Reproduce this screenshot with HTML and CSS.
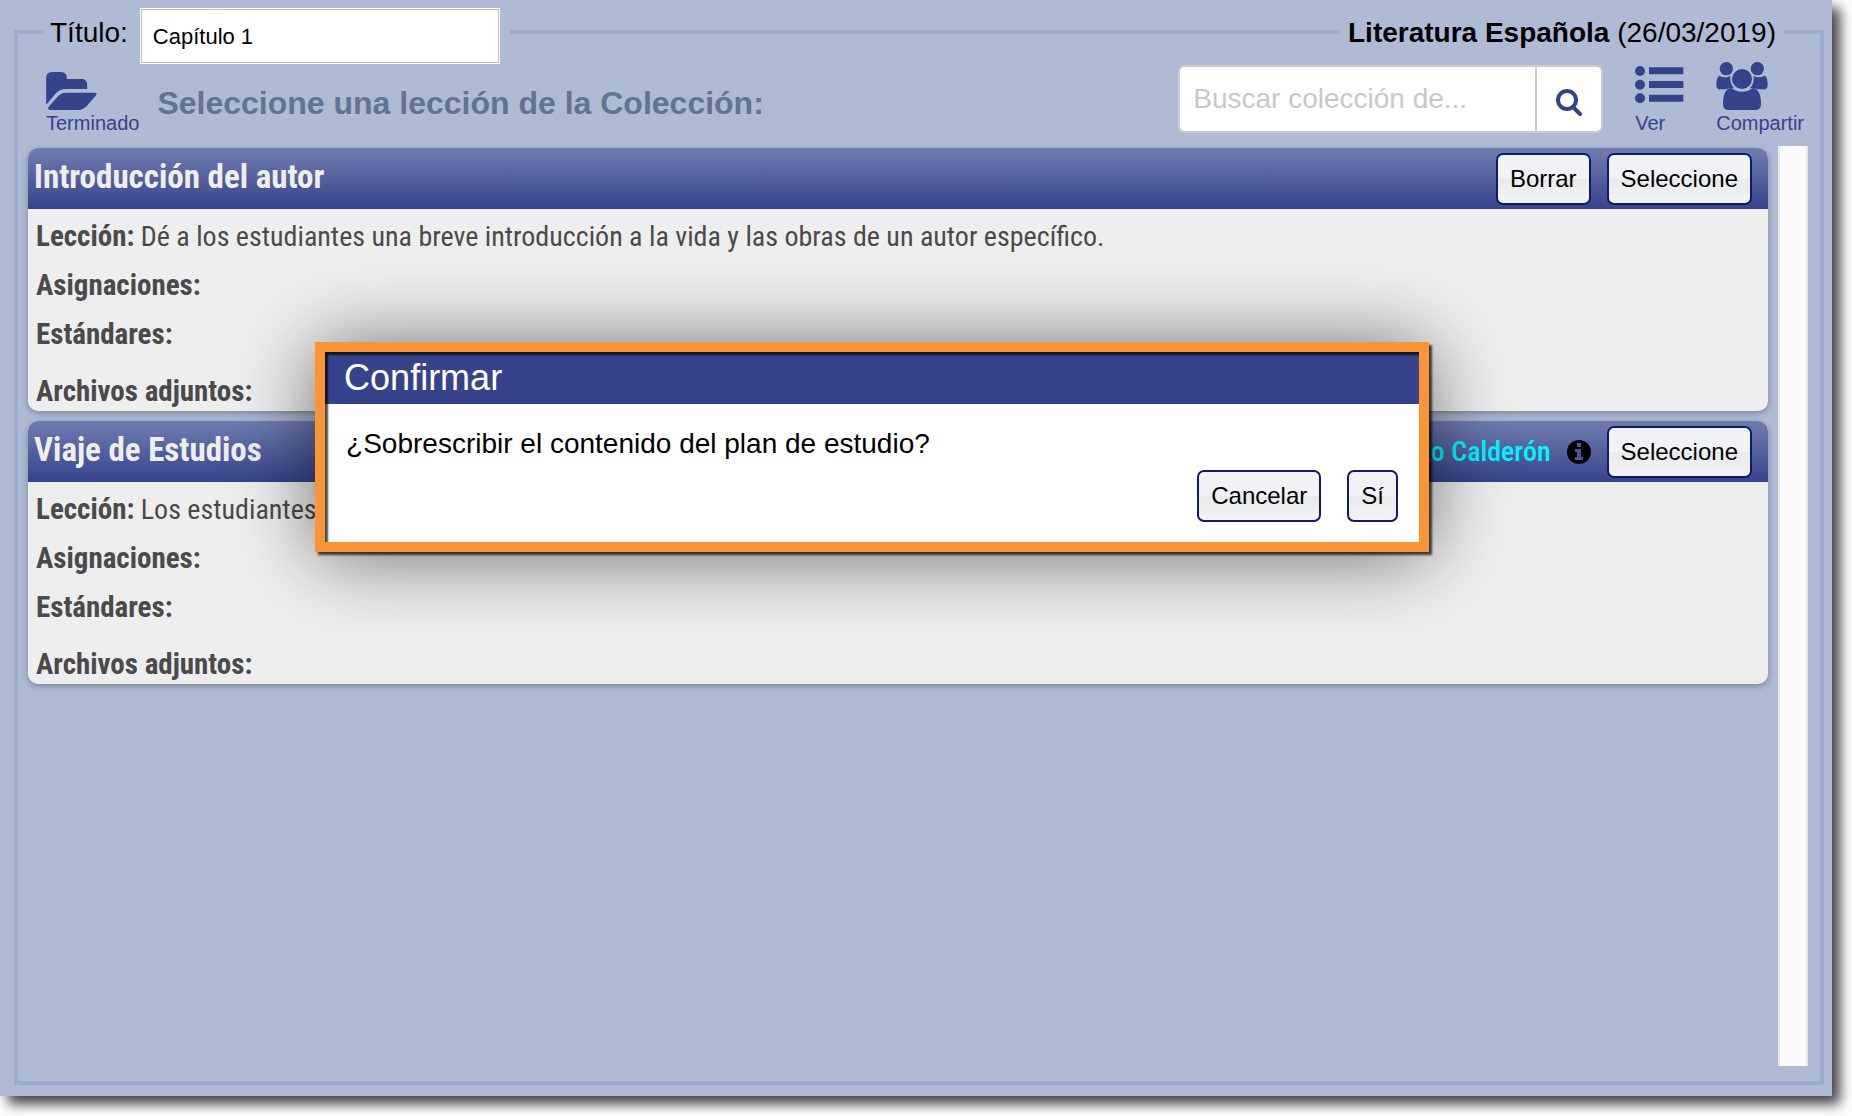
FILE: index.html
```html
<!DOCTYPE html>
<html lang="es">
<head>
    <meta charset="UTF-8">
    <meta name="viewport" content="width=device-width, initial-scale=1.0">
    <title>Literatura Española</title>
    <link rel="stylesheet" href="styles.css">
</head>
<body>
    <div class="window">
        <div class="frame">
            <header class="title-bar">
                <div class="legend">
                    <label for="title">Título:</label>
                    <input type="text" id="title" value="Capítulo 1">
                </div>
                <div class="legend legend-course"><span><b>Literatura Española</b> (26/03/2019)</span></div>
            </header>

            <div class="toolbar">
                <button class="tool">
                    <svg width="51" height="38" viewBox="0 0 152 114">
                        <path d="M0 18Q0 0 18 0H44Q62 0 62 18V21H106Q123 21 123 38V51H60Q42 51 30 63L0 98Z"/>
                        <path d="M12 114Q1 112 9 103L36 72Q46 62 60 62H145Q154 62 150 69L124 100Q112 114 96 114Z"/>
                    </svg>
                    Terminado
                </button>
                <h1>Seleccione una lección de la Colección:</h1>
                <form class="search">
                    <input type="text" placeholder="Buscar colección de..." aria-label="Buscar colección">
                    <button type="button" aria-label="Buscar">
                        <svg width="26" height="27" viewBox="0 0 26 27">
                            <circle cx="11" cy="11" r="9"/>
                            <path d="M17 18l7 7"/>
                        </svg>
                    </button>
                </form>
                <button class="tool tool-view">
                    <svg width="49" height="44" viewBox="0 0 147 132">
                        <circle cx="15" cy="15" r="15"/>
                        <circle cx="15" cy="56" r="15"/>
                        <circle cx="15" cy="97" r="15"/>
                        <path d="M42 4h103v21H42zM42 45h103v21H42zM42 86h103v21H42z"/>
                    </svg>
                    Ver
                </button>
                <button class="tool">
                    <svg width="52" height="48" viewBox="0 0 154 144">
                        <circle cx="30" cy="20" r="20"/>
                        <circle cx="123" cy="20" r="20"/>
                        <circle cx="77" cy="51" r="30"/>
                        <path d="M9 41Q26 50 42 42Q40 68 54 79Q38 77 30 82H12Q0 82 0 68Q0 46 9 41Z"/>
                        <path d="M145 41Q128 50 112 42Q114 68 100 79Q116 77 124 82H142Q154 82 154 68Q154 46 145 41Z"/>
                        <path d="M44 78Q58 89 77 89Q96 89 110 78Q134 82 134 126Q134 144 116 144H38Q20 144 20 126Q20 82 44 78Z"/>
                    </svg>
                    Compartir
                </button>
            </div>

            <main class="content">
                <div class="lessons">
                    <section class="lesson">
                        <div class="lesson-head">
                            <h2>Introducción del autor</h2>
                            <button class="btn">Borrar</button>
                            <button class="btn">Seleccione</button>
                        </div>
                        <div class="lesson-body">
                            <p><b>Lección:</b> Dé a los estudiantes una breve introducción a la vida y las obras de un autor específico.</p>
                            <p><b>Asignaciones:</b></p>
                            <p><b>Estándares:</b></p>
                            <p class="files"><b>Archivos adjuntos:</b></p>
                        </div>
                    </section>
                    <section class="lesson">
                        <div class="lesson-head">
                            <h2>Viaje de Estudios</h2>
                            <span class="author">Alberto Calderón</span>
                            <svg class="info" width="24" height="24" viewBox="0 0 24 24">
                                <circle cx="12" cy="12" r="12"/>
                                <path d="M10 3h4v4h-4zM8 9h6v8h2v3H8v-3h2v-5H8z"/>
                            </svg>
                            <button class="btn">Seleccione</button>
                        </div>
                        <div class="lesson-body">
                            <p><b>Lección:</b> Los estudiantes</p>
                            <p><b>Asignaciones:</b></p>
                            <p><b>Estándares:</b></p>
                            <p class="files"><b>Archivos adjuntos:</b></p>
                        </div>
                    </section>
                </div>
                <div class="scroll-track"></div>
            </main>
        </div>

        <div class="dialog" role="dialog" aria-labelledby="dialog-title">
            <h2 id="dialog-title">Confirmar</h2>
            <p>¿Sobrescribir el contenido del plan de estudio?</p>
            <div class="dialog-buttons">
                <button class="btn">Cancelar</button>
                <button class="btn">Sí</button>
            </div>
        </div>
    </div>
</body>
</html>
```
FILE: styles.css
```css
:root {
    --bg: #afbad4;
    --line: #9dabd1;
    --navy: #36438b;
    --orange: #fa9437;
    --ui-font: "Liberation Sans", Arial, sans-serif;
}

* {
    box-sizing: border-box;
}

body {
    margin: 0;
    padding: 0 20px 20px 0;
    background: #fff;
    font-family: var(--ui-font);
    font-size: 28px;
    color: #000;
    overflow: hidden;
}

h1, h2, p {
    margin: 0;
}

button, input {
    font-family: var(--ui-font);
}

.window {
    position: relative;
    display: flex;
    min-height: calc(100vh - 20px);
    padding: 30px 8px 11px 14px;
    background: var(--bg);
    box-shadow: 8px 8px 12px rgba(0, 0, 0, 0.75);
}

.frame {
    flex: 1;
    display: flex;
    flex-direction: column;
    border: 4px solid var(--line);
}

/* sits on top of the frame border */
.title-bar {
    display: flex;
    justify-content: space-between;
    height: 56px;
    margin: -26px 36px 0 26px;
}

.legend {
    display: flex;
    align-items: center;
    gap: 12px;
    padding: 0 10px 0 6px;
    background: var(--bg);
}

.legend label,
.legend span {
    padding-bottom: 6px;
}

.legend-course {
    padding: 0 8px;
}

.legend input {
    width: 360px;
    height: 56px;
    padding: 2px 12px 0;
    border: 1px solid #fff;
    box-shadow: inset 0 0 0 1px #bbb;
    font-size: 22px;
}

.toolbar {
    display: flex;
    align-items: flex-end;
    height: 82px;
    padding: 0 14px 12px 28px;
}

.tool {
    display: flex;
    flex-direction: column;
    align-items: flex-start;
    gap: 2px;
    padding: 0;
    border: 0;
    background: none;
    color: var(--navy);
    font-size: 20px;
    line-height: 22px;
    cursor: pointer;
}

.tool svg {
    fill: var(--navy);
}

.tool-view {
    margin: 0 32px;
}

.toolbar .tool:last-child {
    margin-right: 2px;
}

.toolbar h1 {
    margin: 0 auto 11px 18px;
    color: #627393;
    font-size: 32px;
    line-height: 40px;
}

.search {
    display: flex;
    width: 425px;
    height: 68px;
    margin-bottom: 1px;
    border: 2px solid #ccc;
    border-radius: 7px;
    background: #fff;
    overflow: hidden;
}

.search input {
    flex: 1;
    min-width: 0;
    padding: 0 13px;
    border: 0;
    font-size: 28px;
}

.search input::placeholder {
    color: #c8c8c8;
}

.search button {
    width: 66px;
    padding: 10px 0 0;
    border: 0;
    border-left: 2px solid #ccc;
    background: #fff;
}

.search svg {
    fill: none;
    stroke: var(--navy);
    stroke-width: 4;
    stroke-linecap: round;
}

.content {
    flex: 1;
    display: flex;
    gap: 10px;
    padding: 0 12px 15px 10px;
}

.lessons {
    flex: 1;
    display: flex;
    flex-direction: column;
    gap: 10px;
    padding-top: 2px;
    font-family: "Roboto Condensed", Roboto, sans-serif;
    color: #4a4a4a;
}

.scroll-track {
    width: 30px;
    border: solid #e8e8e8;
    border-width: 0 2px;
    background: #fafafa;
}

.lesson {
    border-radius: 10px;
    background: #eee;
    box-shadow: 0 2px 6px rgba(0, 0, 0, 0.3);
    overflow: hidden;
}

.lesson-head {
    display: flex;
    align-items: center;
    height: 61px;
    padding: 0 16px 0 6px;
    background: linear-gradient(#717db0, var(--navy));
}

.lesson-head h2 {
    flex: 1;
    padding-bottom: 5px;
    color: #eee;
    font-size: 33px;
}

.btn {
    height: 52px;
    padding: 0 12px;
    border: 2px solid #0f1b64;
    border-radius: 7px;
    background: linear-gradient(#f1f2f5 50%, #e8e9eb 50%, #f3f4f6);
    font-size: 24px;
    color: #000;
    cursor: pointer;
}

.lesson-head .btn {
    margin-left: 16px;
}

.author {
    margin-right: 16px;
    color: #00f6ff;
    font-weight: 500;
}

.info path {
    fill: #48539a;
}

.lesson-body {
    height: 202px;
    padding: 3px 8px;
}

.lesson-body p {
    line-height: 49px;
}

.lesson-body b {
    font-size: 29px;
}

.lesson-body .files {
    line-height: 65px;
}

.dialog {
    position: absolute;
    top: 342px;
    left: 17.2%;
    right: 22%;
    height: 210px;
    border: 10px solid var(--orange);
    background: #fff;
    box-shadow: 3px 3px 2px rgba(0, 0, 0, 0.7), 0 4px 80px rgba(0, 0, 0, 0.55);
}

/* inner shadow cast by the orange border */
.dialog::after {
    content: "";
    position: absolute;
    inset: 0;
    box-shadow: inset 3px 3px 2px rgba(0, 0, 0, 0.7);
    pointer-events: none;
}

.dialog h2 {
    padding: 0 19px;
    background: var(--navy);
    color: #fff;
    font-size: 36px;
    font-weight: normal;
    line-height: 52px;
}

.dialog p {
    padding: 20px 21px 6px;
    line-height: 40px;
}

.dialog-buttons {
    display: flex;
    justify-content: flex-end;
    gap: 26px;
    padding: 0 21px;
}
```
